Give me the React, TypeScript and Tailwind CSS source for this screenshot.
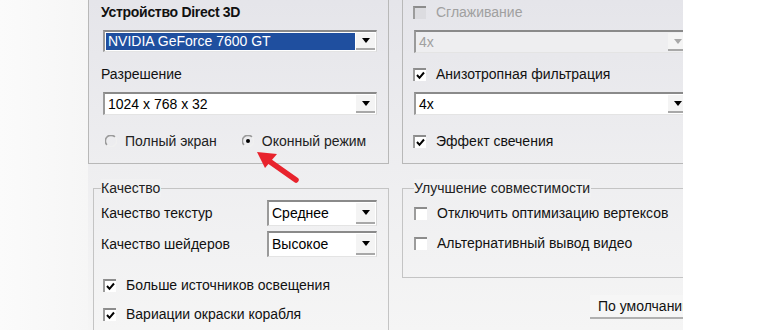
import React from "react";

const font = { fontFamily: '"Liberation Sans", Arial, sans-serif' };

function Arrow({ disabled }: { disabled?: boolean }) {
  return (
    <svg width="8" height="5" viewBox="0 0 8 5">
      <path d="M0 0 H8 L4 5 Z" fill={disabled ? "#a8a8a8" : "#000"} />
    </svg>
  );
}

function Select({
  value,
  className,
  selected,
  disabled,
}: {
  value: string;
  className: string;
  selected?: boolean;
  disabled?: boolean;
}) {
  return (
    <div
      className={
        "flex shrink-0 items-stretch border-t-2 border-l-2 border-t-[#8a8a8a] border-l-[#9a9a9a] border-b border-r border-b-[#e4e4e4] border-r-[#d8d8d8] " +
        (disabled ? "bg-[#eeeef0] " : "bg-white ") +
        className
      }
    >
      <div className="flex-1 flex items-center p-[1px]">
        <div
          className={
            "h-full w-full flex items-center pl-[2px] text-[14px] " +
            (selected ? "bg-[#1f4f9f] text-white" : disabled ? "text-[#a0a0a0]" : "text-black")
          }
        >
          {value}
        </div>
      </div>
      <div className="w-[19px] flex items-center justify-center bg-[#f4f4f4] border-b-2 border-b-[#a8a8a8] mr-[1px] my-[1px]">
        <Arrow disabled={disabled} />
      </div>
    </div>
  );
}

function Check({ checked, disabled, label }: { checked?: boolean; disabled?: boolean; label: string }) {
  return (
    <div className="flex items-center h-[18px] whitespace-nowrap">
      <div
        className={
          "w-[13px] h-[13px] shrink-0 border-t-2 border-l-2 border-t-[#8c8c8c] border-l-[#9c9c9c] flex items-center justify-center " +
          (disabled ? "bg-[#dcdce0]" : "bg-white")
        }
      >
        {checked && (
          <svg width="9" height="9" viewBox="0 0 9 9">
            <path d="M1 4 L3.5 6.8 L8 1.5" stroke="#000" strokeWidth="2" fill="none" />
          </svg>
        )}
      </div>
      <span className={"ml-[10px] text-[14px] " + (disabled ? "text-[#a0a0a0]" : "text-[#111]")}>{label}</span>
    </div>
  );
}

function Radio({ checked, label }: { checked?: boolean; label: string }) {
  return (
    <div className="flex items-center h-[18px] whitespace-nowrap">
      <svg width="12" height="12" viewBox="0 0 12 12">
        <path d="M2 10 A5 5 0 0 1 10 2" stroke="#9a9a9a" strokeWidth="1.6" fill="none" />
        <path d="M10 2 A5 5 0 0 1 2 10" stroke="#f0f0f0" strokeWidth="1.4" fill="none" />
        {checked && <circle cx="6" cy="6" r="2" fill="#000" />}
      </svg>
      <span className="ml-[8px] text-[14px] text-[#222]">{label}</span>
    </div>
  );
}

export default function App() {
  return (
    <div style={font} className="w-[770px] h-[330px] bg-white flex overflow-hidden relative">
      <div className="w-[88px] shrink-0 h-full bg-gradient-to-r from-[#fbfbfb] to-[#f6f6f6]" />
      <div className="w-[595px] shrink-0 h-full overflow-hidden bg-gradient-to-b from-[#e5e5ea] via-[#eeeef0] to-[#f5f5f5]">
        {/* top row */}
        <div className="flex h-[164px]">
          <div className="w-[301px] shrink-0 border-l border-b border-r border-[#b8b8b8] pl-[12px]">
            <div className="mt-[3px] h-[18px] text-[14px] font-bold tracking-[-0.3px] text-[#111] leading-[18px]">
              Устройство Direct 3D
            </div>
            <Select value="NVIDIA GeForce 7600 GT" selected className="ml-[2px] mt-[9px] w-[274px] h-[22px]" />
            <div className="mt-[13px] h-[18px] text-[14px] text-[#111] leading-[18px]">Разрешение</div>
            <Select value="1024 x 768 x 32" className="ml-[2px] mt-[9px] w-[274px] h-[23px]" />
            <div className="flex mt-[17px] ml-[4px]">
              <Radio label="Полный экран" />
              <div className="ml-[25px]">
                <Radio checked label="Оконный режим" />
              </div>
            </div>
          </div>
          <div className="ml-[13px] w-[300px] shrink-0 border-l border-b border-[#b8b8b8] pl-[10px]">
            <div className="mt-[3px]">
              <Check disabled label="Сглаживание" />
            </div>
            <Select value="4x" disabled className="ml-[1px] mt-[9px] w-[275px] h-[23px]" />
            <div className="mt-[12px]">
              <Check checked label="Анизотропная фильтрация" />
            </div>
            <Select value="4x" className="ml-[1px] mt-[9px] w-[275px] h-[23px]" />
            <div className="mt-[17px]">
              <Check checked label="Эффект свечения" />
            </div>
          </div>
        </div>
        {/* bottom row */}
        <div className="flex mt-[24px]">
          <div className="ml-[5px] w-[296px] shrink-0 h-[160px] border-t border-l border-r border-[#c4c4c4] relative pl-[7px]">
            <div className="absolute -top-[10px] left-[7px] text-[14px] leading-[18px] text-[#222] bg-[#f1f1f2] pr-[1px]">
              Качество
            </div>
            <div className="flex items-center mt-[11px] h-[26px]">
              <div className="w-[166px] text-[14px] text-[#111]">Качество текстур</div>
              <Select value="Среднее" className="w-[110px] h-[26px]" />
            </div>
            <div className="flex items-center mt-[5px] h-[26px]">
              <div className="w-[166px] text-[14px] text-[#111]">Качество шейдеров</div>
              <Select value="Высокое" className="w-[110px] h-[26px]" />
            </div>
            <div className="mt-[19px] ml-[2px]">
              <Check checked label="Больше источников освещения" />
            </div>
            <div className="mt-[11px] ml-[2px]">
              <Check checked label="Вариации окраски корабля" />
            </div>
          </div>
          <div className="ml-[13px] shrink-0 flex flex-col">
            <div className="w-[300px] h-[90px] border-t border-l border-b border-[#c4c4c4] relative pl-[11px]">
              <div className="absolute -top-[10px] left-[11px] text-[14px] leading-[18px] text-[#222] bg-[#f1f1f2] pr-[1px]">
                Улучшение совместимости
              </div>
              <div className="mt-[15px]">
                <Check label="Отключить оптимизацию вертексов" />
              </div>
              <div className="mt-[12px]">
                <Check label="Альтернативный вывод видео" />
              </div>
            </div>
            <div className="ml-[188px] mt-[17px] w-[110px] h-[24px] border-b-2 border-b-[#b0b0b0] bg-[#f6f6f6] flex items-center pl-[8px] text-[14px] text-[#111] whitespace-nowrap">
              По умолчанию
            </div>
          </div>
        </div>
      </div>
      <svg className="absolute left-[251px] top-[147px]" width="52" height="38" viewBox="0 0 52 38">
        <path d="M45 33 L18 14" stroke="#e8232d" strokeWidth="5.5" strokeLinecap="round" />
        <path d="M6 5 L26 7 L14 21 Z" fill="#e8232d" />
      </svg>
    </div>
  );
}
